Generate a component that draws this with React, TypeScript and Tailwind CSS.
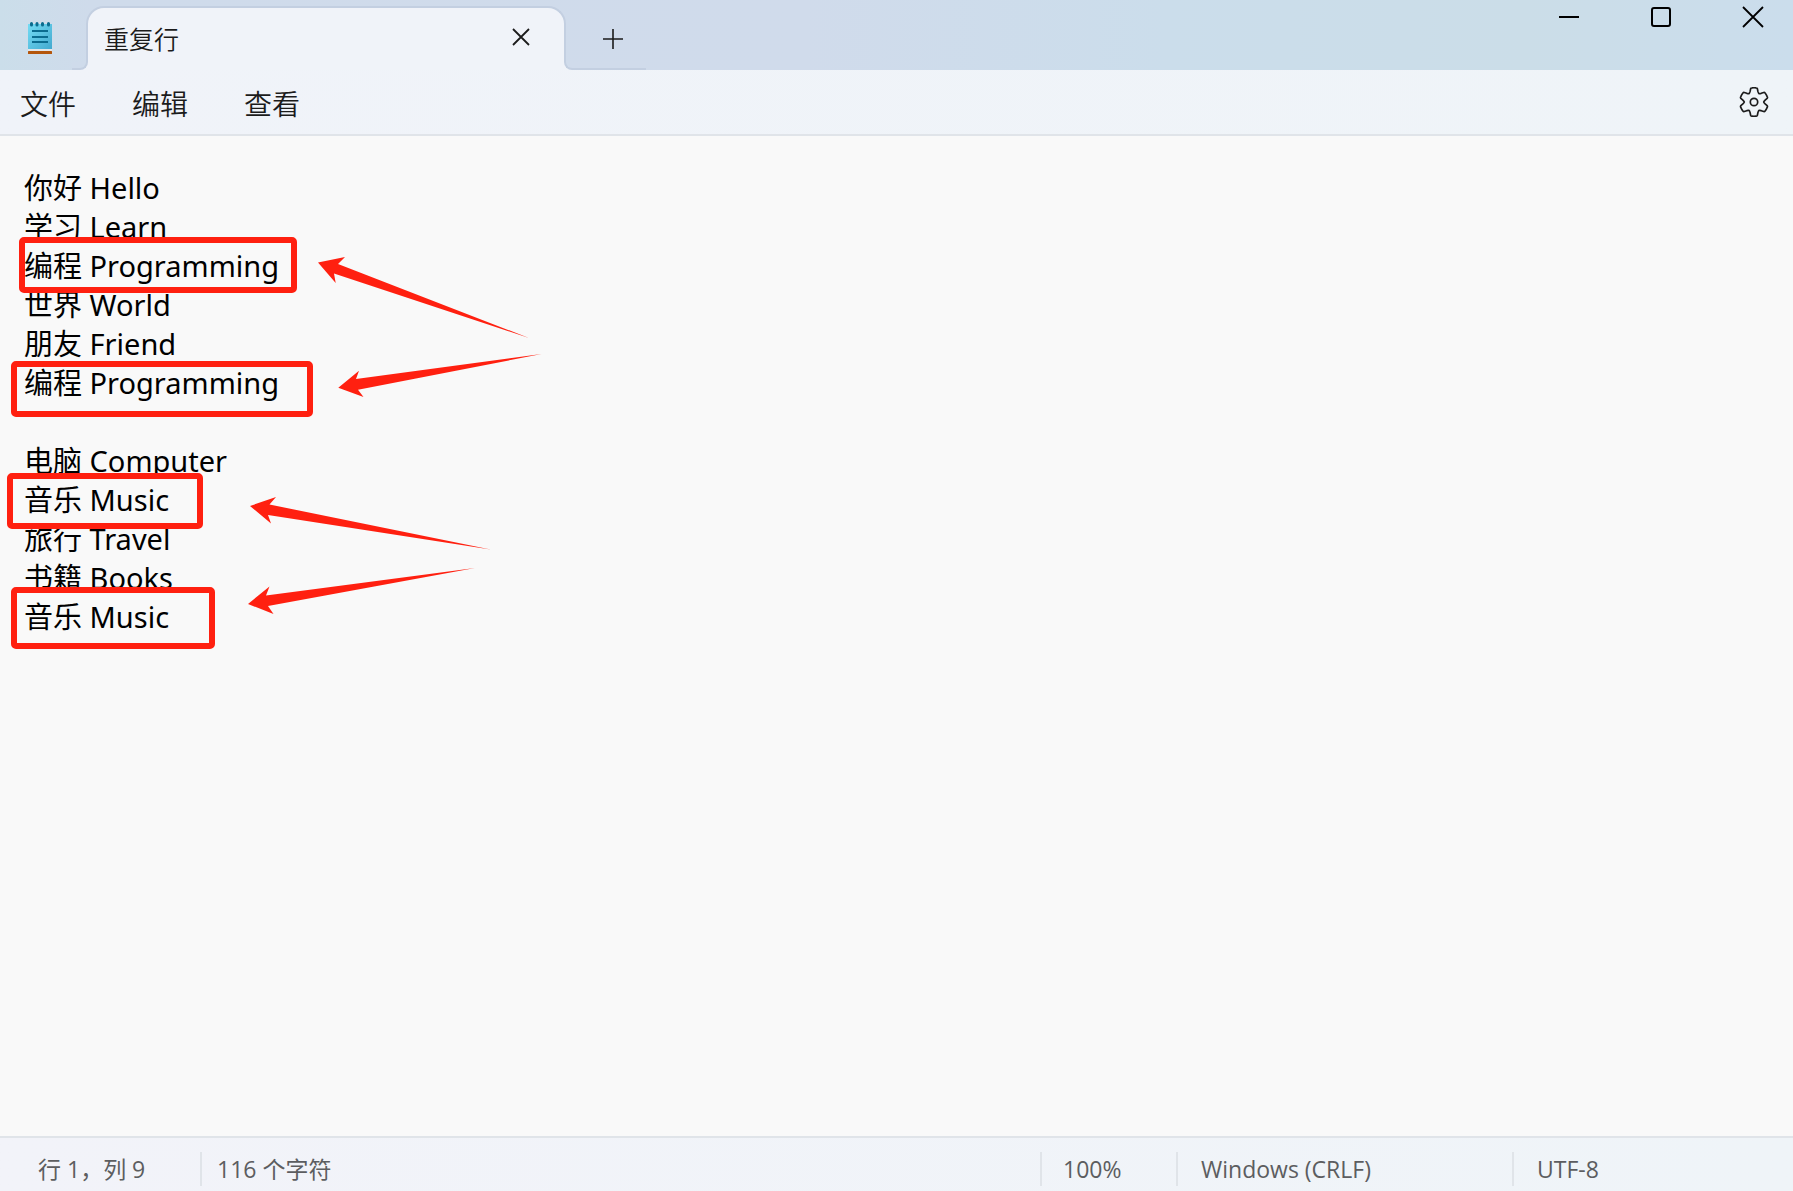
import { useState } from 'react';

const menus = ['文件', '编辑', '查看'];

const initialText = [
  '你好 Hello',
  '学习 Learn',
  '编程 Programming',
  '世界 World',
  '朋友 Friend',
  '编程 Programming',
  '',
  '电脑 Computer',
  '音乐 Music',
  '旅行 Travel',
  '书籍 Books',
  '音乐 Music',
].join('\n');

// Marked lines, in editor coordinates
const boxes = [
  { x: 22, y: 104, w: 272, h: 50 },
  { x: 14, y: 228, w: 296, h: 50 },
  { x: 10, y: 340, w: 190, h: 50 },
  { x: 14, y: 454, w: 198, h: 56 },
];

const arrows = [
  '318,126.5 345,121 338,128 529,202 334,137.5 335.7,147',
  '338.3,251.7 359,234.7 356,243 541.5,218 358,253.7 363.5,261',
  '250,370 276,361 269.5,368.5 490.5,413.5 268,379 271,387.5',
  '248,468 269.5,450.5 266,459.5 475,432 268,470 273.5,478',
];

// Six-tooth gear outline, one tooth rotated around the center
function gearPath() {
  const rot = (x: number, y: number, k: number) => {
    const a = (k * Math.PI) / 3;
    const rx = x * Math.cos(a) - y * Math.sin(a);
    const ry = x * Math.sin(a) + y * Math.cos(a);
    return `${rx.toFixed(2)} ${ry.toFixed(2)}`;
  };
  let d = `M${rot(-3.9, -10.6, 0)}`;
  for (let k = 0; k < 6; k++) {
    d += `L${rot(-3.4, -13.2, k)}Q${rot(-3.2, -14, k)} ${rot(-2.2, -14.1, k)}`;
    d += `Q${rot(0, -14.4, k)} ${rot(2.2, -14.1, k)}Q${rot(3.2, -14, k)} ${rot(3.4, -13.2, k)}`;
    d += `L${rot(3.9, -10.6, k)}C${rot(4.6, -8, k)} ${rot(-4.6, -8, k + 1)} ${rot(-3.9, -10.6, k + 1)}`;
  }
  return d + 'Z';
}

function NotepadIcon() {
  return (
    <svg className="h-8 w-6" viewBox="0 0 24 32" aria-hidden="true">
      <defs>
        <linearGradient id="page" x1="0" y1="0" x2="1" y2="1">
          <stop offset="0" stopColor="#74dcf4" />
          <stop offset="1" stopColor="#43a9cf" />
        </linearGradient>
      </defs>
      <rect y="24" width="24" height="5" fill="#e3e6ea" />
      <rect y="2" width="24" height="25" fill="url(#page)" />
      <rect y="29" width="24" height="3" rx="0.5" fill="#b4560b" />
      <path d="M3.5 1.5v1.5M9 1.5v1.5M14.5 1.5v1.5M20.5 1.5v1.5" stroke="#0b6c8f" strokeWidth="3" strokeLinecap="round" />
      <path d="M4 9h16M4 15h16M4 20h16" stroke="#0b6c8f" strokeWidth="1.8" />
    </svg>
  );
}

function TitleBar() {
  return (
    <header className="flex h-[70px] items-stretch bg-[linear-gradient(to_right,#cbdeea,#cfdbeb_5%,#d0dbeb_45%,#cbddeb_65%,#cbdde8_85%,#cbddec)]">
      <div className="flex w-[86px] shrink-0 pt-[22px] pl-7">
        <NotepadIcon />
      </div>

      <div className="relative mt-1.5 flex w-[480px] items-start justify-between rounded-t-[18px] border-2 border-b-0 border-[#c3cfe1] bg-[#f0f3f9] pt-3 pr-[34px] pl-4">
        <span className="text-[25px] leading-[38px] font-[350] text-[#1b1b1b]">重复行</span>
        <button type="button" aria-label="关闭标签页" className="pt-2">
          <svg className="size-[18px]" viewBox="0 0 18 18" stroke="#1b1b1b" strokeWidth="1.8">
            <path d="M1 1l16 16M17 1L1 17" />
          </svg>
        </button>
        {/* outward curves at the foot of the tab */}
        <div className="absolute bottom-0 -left-4 h-2 w-4 bg-[#f0f3f9]">
          <div className="h-full rounded-br-[8px] border-r-2 border-b-2 border-[#c3cfe1] bg-[#cfdbeb]" />
        </div>
        <div className="absolute -right-[82px] bottom-0 h-2 w-[82px] bg-[#f0f3f9]">
          <div className="h-full rounded-bl-[8px] border-b-2 border-l-2 border-[#c3cfe1] bg-[#d0dbeb]" />
        </div>
      </div>

      <button type="button" aria-label="新建标签页" className="flex pt-[29px] pl-[37px]">
        <svg className="size-5" viewBox="0 0 20 20" stroke="#1b1b1b" strokeWidth="1.6">
          <path d="M10 0v20M0 10h20" />
        </svg>
      </button>

      <div className="ml-auto flex items-start gap-[70px] pt-1.5 pr-[29px]">
        <button type="button" aria-label="最小化">
          <svg className="size-[22px]" viewBox="0 0 22 22" stroke="#000" strokeWidth="2">
            <path d="M1 11h20" />
          </svg>
        </button>
        <button type="button" aria-label="最大化">
          <svg className="size-[22px]" viewBox="0 0 22 22" fill="none" stroke="#000" strokeWidth="2">
            <rect x="2" y="2" width="18" height="18" rx="2" />
          </svg>
        </button>
        <button type="button" aria-label="关闭">
          <svg className="size-[22px]" viewBox="0 0 22 22" stroke="#000" strokeWidth="1.8">
            <path d="M1 1l20 20M21 1L1 21" />
          </svg>
        </button>
      </div>
    </header>
  );
}

function MenuBar() {
  return (
    <nav className="flex h-[66px] items-start border-b-2 border-[#e0e4e9] bg-linear-to-r from-[#f0f3f9] to-[#eff4f8] pr-6 pl-5">
      <div className="flex gap-14 pt-3.5">
        {menus.map((label) => (
          <button key={label} type="button" className="text-[28px] leading-10 font-[350] text-[#1b1b1b]">
            {label}
          </button>
        ))}
      </div>
      <button type="button" aria-label="设置" className="ml-auto pt-[17px]">
        <svg className="size-[30px]" viewBox="-15 -15 30 30" fill="none" stroke="#1b1b1b" strokeWidth="1.7">
          <path d={gearPath()} strokeLinejoin="round" />
          <circle r="3.7" />
        </svg>
      </button>
    </nav>
  );
}

function Annotations() {
  return (
    <svg className="pointer-events-none absolute top-0 left-0 h-[520px] w-[560px]" viewBox="0 0 560 520" aria-hidden="true">
      {boxes.map((b) => (
        <rect key={b.y} x={b.x} y={b.y} width={b.w} height={b.h} rx="2" fill="none" stroke="#ff2010" strokeWidth="6" />
      ))}
      {arrows.map((points) => (
        <polygon key={points} points={points} fill="#ff2010" />
      ))}
    </svg>
  );
}

function StatusBar() {
  return (
    <footer className="flex h-[55px] items-start border-t-2 border-[#e0e4e9] bg-linear-to-r from-[#f2f3f9] to-[#eff4f8] pt-3.5 text-[23px] leading-[34px] text-[#5c5d60]">
      <div className="w-[200px] pl-[38px]">行 1，列 9</div>
      <div className="border-l-2 border-[#e0e4e9] pl-[15px]">116 个字符</div>
      <div className="ml-auto w-[136px] border-l-2 border-[#e0e4e9] pl-[21px]">100%</div>
      <div className="w-[336px] border-l-2 border-[#e0e4e9] pl-[23px]">Windows (CRLF)</div>
      <div className="w-[281px] border-l-2 border-[#e0e4e9] pl-[23px]">UTF-8</div>
    </footer>
  );
}

export default function App() {
  const [text, setText] = useState(initialText);

  return (
    <div className="flex min-h-screen flex-col bg-[#f9f9f9] font-['Open_Sans','Noto_Sans_CJK_SC',sans-serif]">
      <TitleBar />
      <MenuBar />
      <main className="relative flex flex-1">
        <textarea
          aria-label="文本编辑器"
          spellCheck={false}
          value={text}
          onChange={(e) => setText(e.target.value)}
          className="flex-1 resize-none bg-transparent px-6 pt-8 font-['Noto_Sans','Noto_Sans_CJK_SC',sans-serif] text-[29px] leading-[39px] text-black outline-none"
        />
        <Annotations />
      </main>
      <StatusBar />
    </div>
  );
}
